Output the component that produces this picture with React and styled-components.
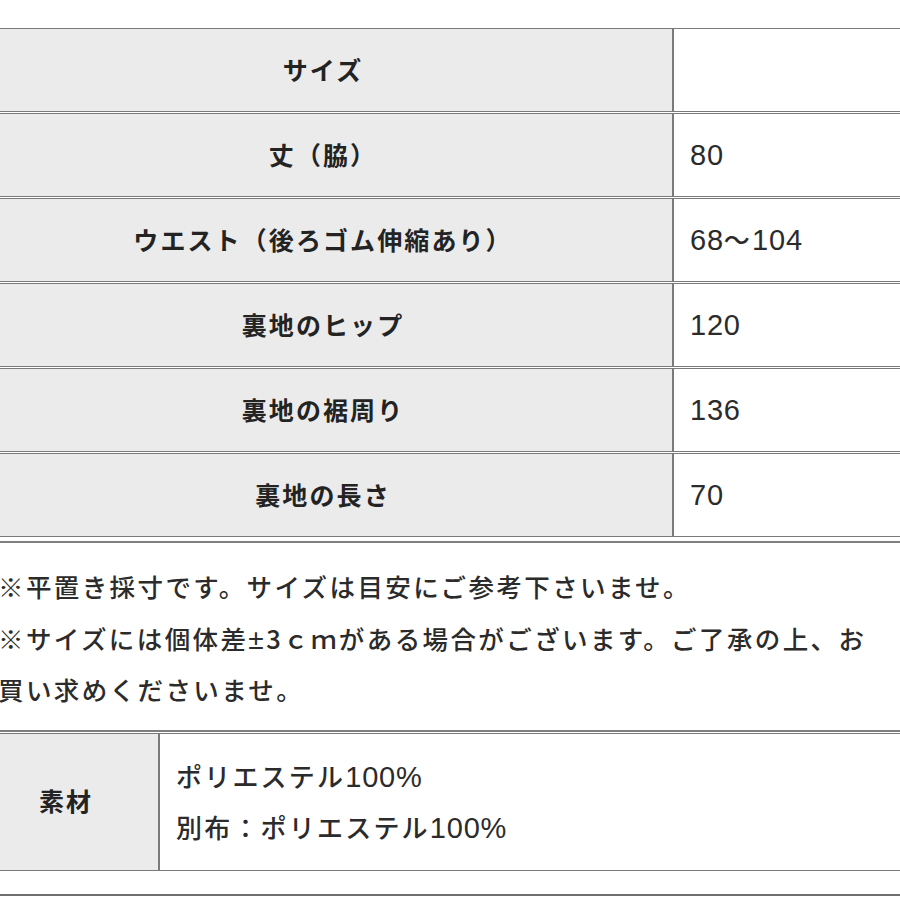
import React from 'react';
import styled, { createGlobalStyle } from 'styled-components';

const GlobalStyle = createGlobalStyle`
  html, body {
    margin: 0;
    padding: 0;
    background: #fff;
  }
  body {
    font-family: "Noto Sans CJK JP", "Noto Sans", sans-serif;
    color: #2b2b2b;
    overflow: hidden;
  }
`;

const Page = styled.div`
  width: 900px;
  height: 900px;
  overflow: hidden;
  padding-top: 28px;
  box-sizing: border-box;
`;

const SpecTable = styled.table`
  margin-left: -26px;
  width: 960px;
  border-collapse: separate;
  border-spacing: 0 1px;
  margin-top: -1px;
  padding-bottom: 3px;
  border-bottom: 2px solid #7f7f7f;
  table-layout: fixed;
`;

const HeadCell = styled.th`
  width: ${(p) => p.$width}px;
  background: #ebebeb;
  border-top: 1px solid #7a7a7a;
  border-bottom: 1px solid #7a7a7a;
  font-size: 25px;
  font-weight: 700;
  letter-spacing: 2.1px;
  color: #232323;
  text-align: center;
  padding: 0 0 3px;
  height: ${(p) => p.$height}px;
  box-sizing: border-box;
`;

const ValueCell = styled.td`
  background: #fff;
  border-top: 1px solid #7a7a7a;
  border-bottom: 1px solid #7a7a7a;
  border-left: 2px solid #7a7a7a;
  font-size: 26px;
  font-weight: 500;
  letter-spacing: 2.2px;
  color: #2b2b2b;
  padding: ${(p) => p.$padding || '0 16px 3px'};
  line-height: ${(p) => p.$lineHeight || 'normal'};
  vertical-align: middle;
  box-sizing: border-box;
`;

const Num = styled.span`
  font-family: "Liberation Sans", "Noto Sans CJK JP", sans-serif;
  font-size: 29px;
  line-height: 1;
  letter-spacing: 0.8px;
`;

const Notes = styled.div`
  margin: 17px 0 16px -2px;
  font-size: 25.5px;
  font-weight: 500;
  line-height: 51.5px;
  letter-spacing: 2.4px;
  color: #2b2b2b;
  white-space: nowrap;
`;

const NoteNum = styled.span`
  font-family: "Liberation Sans", "Noto Sans CJK JP", sans-serif;
  font-size: 28px;
  line-height: 1;
`;

const MaterialTable = styled(SpecTable)`
  border-top: 2px solid #7f7f7f;
  border-bottom: none;
  padding-top: 1px;
  padding-bottom: 0;
  border-spacing: 0;
`;

const NextEdge = styled.div`
  margin-top: 23px;
  border-top: 2px solid #6f6f6f;
`;

const sizes = [
  ['サイズ', null],
  ['丈（脇）', <Num>80</Num>],
  ['ウエスト（後ろゴム伸縮あり）', <><Num>68</Num>〜<Num>104</Num></>],
  ['裏地のヒップ', <Num>120</Num>],
  ['裏地の裾周り', <Num>136</Num>],
  ['裏地の長さ', <Num>70</Num>],
];

const App = () => (
  <Page>
    <GlobalStyle />
    <SpecTable>
      <tbody>
        {sizes.map(([label, value]) => (
          <tr key={label}>
            <HeadCell $width={698} $height={84}>{label}</HeadCell>
            <ValueCell>{value}</ValueCell>
          </tr>
        ))}
      </tbody>
    </SpecTable>
    <Notes>
      ※平置き採寸です。サイズは目安にご参考下さいませ。
      <br />
      ※サイズには個体差<NoteNum>±</NoteNum>3ｃｍがある場合がございます。ご了承の上、お
      <br />
      買い求めくださいませ。
    </Notes>
    <MaterialTable>
      <tbody>
        <tr>
          <HeadCell $width={184} $height={138}>素材</HeadCell>
          <ValueCell $padding="16px 16px 18px" $lineHeight="51px">
            ポリエステル<Num>100%</Num>
            <br />
            別布：ポリエステル<Num>100%</Num>
          </ValueCell>
        </tr>
      </tbody>
    </MaterialTable>
    <NextEdge />
  </Page>
);

export default App;
